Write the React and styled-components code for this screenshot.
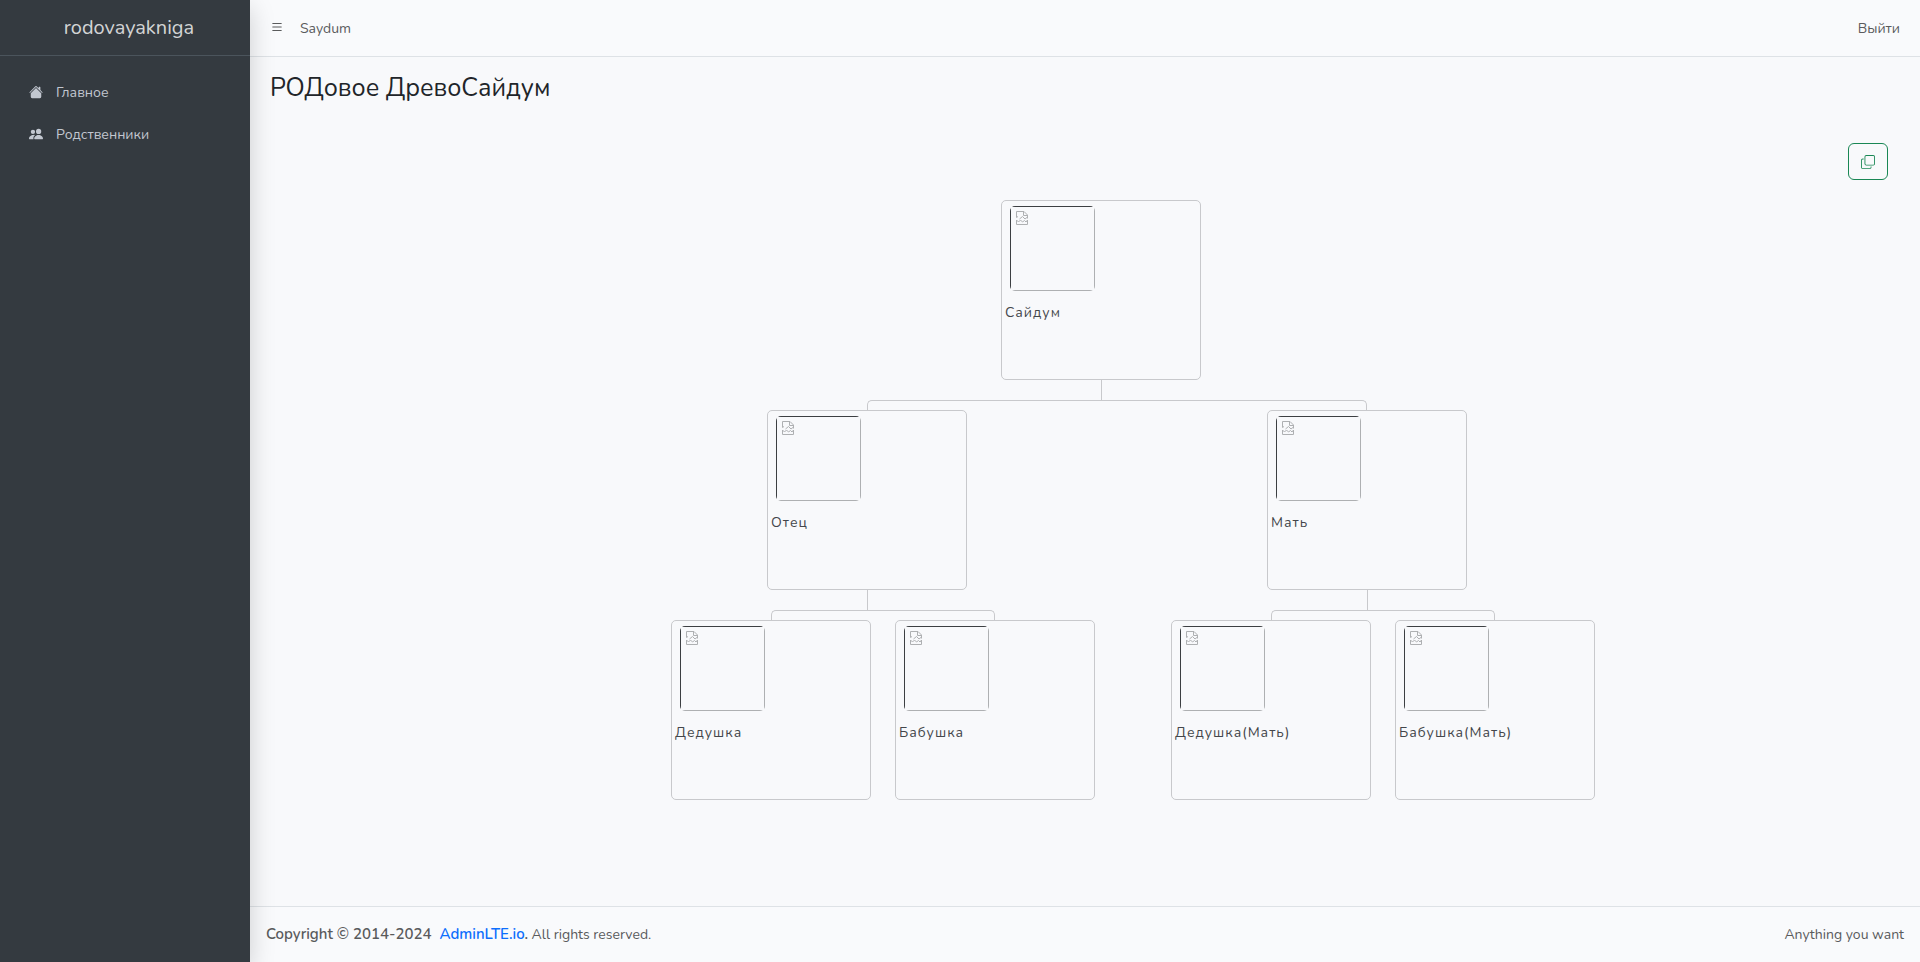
import React from 'react';
import styled, { createGlobalStyle } from 'styled-components';
import { BsHouseFill, BsPeopleFill, BsList, BsCopy } from 'react-icons/bs';

const GlobalStyle = createGlobalStyle`
  *, *::before, *::after { box-sizing: border-box; }
  body {
    margin: 0;
    background: #f8f9fb;
    color: #212529;
    font: 400 14px/24px Nunito, Lato, "Noto Sans", sans-serif;
  }
`;

const Page = styled.div`
  display: grid;
  grid-template-columns: 250px minmax(0, 1fr);
  min-height: 100vh;
`;

const Sidebar = styled.aside`
  position: relative;
  background: #343a40;
  box-shadow: 0 8px 24px rgba(0, 0, 0, 0.18);
`;

const Brand = styled.a`
  display: flex;
  align-items: center;
  justify-content: center;
  height: 56px;
  padding-left: 8px;
  border-bottom: 1px solid #4b545c;
  color: rgba(255, 255, 255, 0.8);
  font-size: 20px;
  text-decoration: none;
`;

const Menu = styled.ul`
  display: flex;
  flex-direction: column;
  gap: 2px;
  margin: 0;
  padding: 16px 8px;
  list-style: none;
`;

const MenuLink = styled.a`
  display: flex;
  align-items: center;
  gap: 13px;
  height: 40px;
  padding: 2px 21px 0;
  color: #c2c7d0;
  text-decoration: none;

  svg { margin-bottom: 2px; }
`;

const Main = styled.div`
  display: flex;
  flex-direction: column;
`;

const Topbar = styled.header`
  display: flex;
  align-items: center;
  gap: 16px;
  height: 57px;
  padding: 2px 20px 0;
  background: #f9fafc;
  border-bottom: 1px solid #dee2e6;
`;

const MenuToggle = styled.button`
  display: flex;
  padding: 0 0 4px;
  border: 0;
  background: none;
  color: #5a5b5c;
`;

const TopLink = styled.a`
  color: #5a5b5c;
  text-decoration: none;
`;

const LogoutLink = styled(TopLink)`
  margin-left: auto;
`;

const Content = styled.main`
  flex: 1;
  padding: 15px 0 32px;
`;

const Title = styled.h3`
  margin: 0 20px;
  font-size: 25px;
  font-weight: 400;
  line-height: 32px;
`;

const Actions = styled.div`
  display: flex;
  justify-content: flex-end;
  padding: 39px 32px 0;
`;

const CopyButton = styled.button`
  display: flex;
  align-items: center;
  justify-content: center;
  width: 40px;
  height: 37px;
  border: 1px solid #198754;
  border-radius: 6px;
  background: transparent;
  color: #198754;
`;

const line = '1px solid #c8c9cc';

const Branch = styled.ul`
  position: relative;
  display: flex;
  justify-content: center;
  gap: 4px;
  margin: 0;
  padding: ${(p) => (p.$root ? '10px' : '20px')} 0 0 32px;
  list-style: none;

  &::before {
    content: ${(p) => (p.$root ? 'none' : '""')};
    position: absolute;
    top: 0;
    left: 50%;
    height: 20px;
    border-left: ${line};
  }
`;

const Node = styled.li`
  position: relative;
  display: flex;
  flex-direction: column;
  align-items: center;
  padding: 10px 10px 0;

  &::before {
    content: ${(p) => (p.$side ? '""' : 'none')};
    position: absolute;
    top: 0;
    height: 10px;
    border-top: ${line};
    ${(p) =>
      p.$side === 'left'
        ? `left: 50%; right: -4px; border-left: ${line}; border-top-left-radius: 5px;`
        : `left: 0; right: 50%; border-right: ${line}; border-top-right-radius: 5px;`}
  }
`;

const Card = styled.a`
  width: 200px;
  height: 180px;
  padding: 5px 3px;
  border: ${line};
  border-radius: 5px;
  color: #43464a;
  letter-spacing: 1px;
  text-decoration: none;
`;

const Portrait = styled.span`
  display: block;
  width: 85px;
  height: 85px;
  margin: 0 5px 10px;
  border-radius: 5px;
  overflow: hidden;
`;

const EmptyPhoto = styled.span`
  display: block;
  height: 100%;
  padding: 4px 5px;
  border: 1px solid;
  border-color: #3c3f42 #aeb0b2 #aeb0b2 #3c3f42;
`;

const BrokenIcon = styled.svg`
  display: block;
  width: 12px;
  height: 14px;
`;

const Footer = styled.footer`
  display: flex;
  align-items: center;
  justify-content: space-between;
  height: 56px;
  padding: 0 16px;
  background: #f9fafc;
  border-top: 1px solid #dee2e6;
  color: #5a5b5c;
`;

const Copyright = styled.strong`
  font-size: 15px;
  font-weight: 600;
`;

const FooterLink = styled.a`
  margin-left: 4px;
  color: #0d6efd;
  text-decoration: none;
`;

const family = {
  name: 'Сайдум',
  parents: [
    { name: 'Отец', parents: [{ name: 'Дедушка' }, { name: 'Бабушка' }] },
    { name: 'Мать', parents: [{ name: 'Дедушка(Мать)' }, { name: 'Бабушка(Мать)' }] },
  ],
};

function Person({ person, side }) {
  return (
    <Node $side={side}>
      <Card href="#">
        <Portrait>
          <EmptyPhoto>
            <BrokenIcon viewBox="0 0 12 14" fill="none" stroke="#aeb0b2" aria-hidden="true">
              <path d="M.5 6.5V.5H8L11.5 4V7.5M7.5.5V4.5H11.5" />
              <path d="M.5 6.5L2 5.5M3.5 8L6.5 5.5L9 8L11.5 6" />
              <path d="M.5 9V13.5H11.5V9M.5 9L2.5 11L4.5 9L6.5 11L8.5 9.5L10 11L11.5 9" />
            </BrokenIcon>
          </EmptyPhoto>
        </Portrait>
        {person.name}
      </Card>
      {person.parents && (
        <Branch>
          {person.parents.map((p, i) => (
            <Person key={p.name} person={p} side={i === 0 ? 'left' : 'right'} />
          ))}
        </Branch>
      )}
    </Node>
  );
}

export default function App() {
  return (
    <Page>
      <GlobalStyle />
      <Sidebar>
        <Brand href="#">rodovayakniga</Brand>
        <nav>
          <Menu>
            <li><MenuLink href="#"><BsHouseFill size={14} />Главное</MenuLink></li>
            <li><MenuLink href="#"><BsPeopleFill size={14} />Родственники</MenuLink></li>
          </Menu>
        </nav>
      </Sidebar>
      <Main>
        <Topbar>
          <MenuToggle type="button" aria-label="Меню"><BsList size={14} /></MenuToggle>
          <TopLink href="#">Saydum</TopLink>
          <LogoutLink href="#">Выйти</LogoutLink>
        </Topbar>
        <Content>
          <Title>РОДовое ДревоСайдум</Title>
          <Actions>
            <CopyButton type="button" aria-label="Копировать"><BsCopy size={14} /></CopyButton>
          </Actions>
          <Branch $root>
            <Person person={family} />
          </Branch>
        </Content>
        <Footer>
          <span>
            <Copyright>Copyright © 2014-2024 <FooterLink href="#">AdminLTE.io</FooterLink>.</Copyright> All rights reserved.
          </span>
          <span>Anything you want</span>
        </Footer>
      </Main>
    </Page>
  );
}
